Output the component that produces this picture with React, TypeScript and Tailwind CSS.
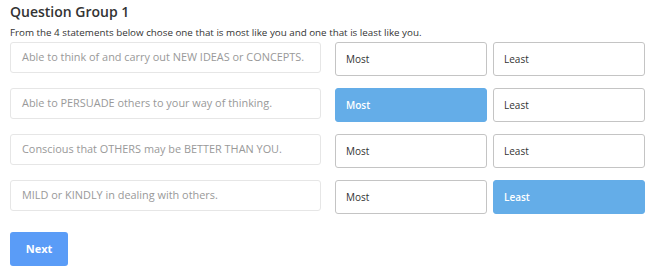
import { useState } from "react";

const statements = [
  "Able to think of and carry out NEW IDEAS or CONCEPTS.",
  "Able to PERSUADE others to your way of thinking.",
  "Conscious that OTHERS may be BETTER THAN YOU.",
  "MILD or KINDLY in dealing with others.",
];

function Choice({ label, active, onClick }: { label: string; active: boolean; onClick: () => void }) {
  return (
    <button
      onClick={onClick}
      className={
        active
          ? "w-[152px] h-[34px] rounded-[3px] border border-[#64ade8] bg-[#64ade8] text-left pl-[10px] text-[10px] font-semibold text-white"
          : "w-[152px] h-[34px] rounded-[3px] border border-[#c4c4c4] bg-white text-left pl-[10px] text-[10px] text-[#333]"
      }
    >
      {label}
    </button>
  );
}

export default function App() {
  const [most, setMost] = useState<number | null>(1);
  const [least, setLeast] = useState<number | null>(3);

  return (
    <div className="bg-white w-[662px] h-[277px] px-[10px] pt-[2px]" style={{ fontFamily: '"Open Sans", "Noto Sans", sans-serif' }}>
      <h2 className="text-[14px] leading-[20px] font-semibold text-[#333]">Question Group 1</h2>
      <p className="text-[9.8px] leading-[12px] text-[#333] mt-[5px]">
        From the 4 statements below chose one that is most like you and one that is least like you.
      </p>

      <div className="flex flex-col gap-[12px] mt-[3px]">
        {statements.map((s, i) => (
          <div key={s} className="flex items-start">
            <div className="w-[311px] h-[31px] rounded-[3px] border border-[#e6e6e6] flex items-center pl-[11px] text-[10.9px] text-[#999]">
              {s}
            </div>
            <div className="flex gap-[6px] ml-[14px]">
              <Choice label="Most" active={most === i} onClick={() => setMost(i)} />
              <Choice label="Least" active={least === i} onClick={() => setLeast(i)} />
            </div>
          </div>
        ))}
      </div>

      <button className="mt-[18px] w-[58px] h-[34px] rounded-[3px] bg-[#5a9cf7] text-white text-[11px] font-bold">
        Next
      </button>
    </div>
  );
}
